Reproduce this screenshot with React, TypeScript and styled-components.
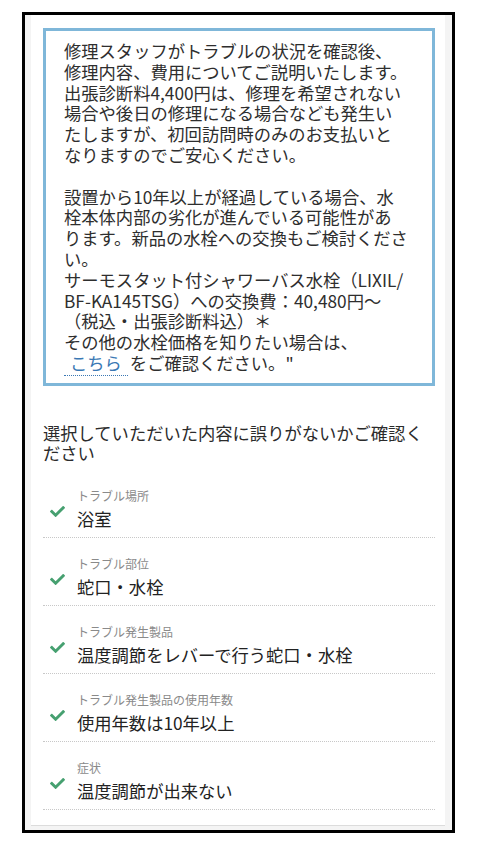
import styled, { createGlobalStyle } from 'styled-components';
import { FaCheck } from 'react-icons/fa';

const GlobalStyle = createGlobalStyle`
  html, body {
    margin: 0;
    padding: 0;
    background: #ffffff;
  }
  body {
    font-family: "Noto Sans CJK JP", "Noto Sans", sans-serif;
    color: #2b2b2b;
  }
`;

const Frame = styled.div`
  box-sizing: border-box;
  width: 433px;
  margin: 12px 0 0 22px;
  border: 3px solid #000;
  background: #f4f4f4;
  padding: 0 7px 4px 6px;
`;

const Panel = styled.section`
  background: #fff;
  border-bottom: 1px solid #dcdcdc;
  padding: 13px 10px 15px 12px;
`;

const Notice = styled.div`
  border: 3px solid #7fb7d9;
  padding: 10px 18px 9px 18px;
  font-size: 17.3px;
  line-height: 20.8px;
  color: #2e2e2e;
  white-space: nowrap;
`;

const Blank = styled.span`
  display: block;
  height: 20.8px;
`;

const MoreLink = styled.a`
  color: #3a78b4;
  text-decoration: none;
  padding: 0 6px 0 6px;
  margin-right: 2px;
  border-bottom: 1px dotted #3a78b4;
`;

const Heading = styled.h2`
  margin: 37px 0 6px;
  font-size: 17.3px;
  line-height: 20.5px;
  font-weight: 400;
  color: #2b2b2b;
`;

const List = styled.ul`
  list-style: none;
  margin: 0;
  padding: 0;
`;

const Item = styled.li`
  display: flex;
  align-items: center;
  padding: 18px 0 7px;
  border-bottom: 1px dotted #c8c8c8;
`;

const Mark = styled.span`
  flex: 0 0 34px;
  box-sizing: border-box;
  padding-left: 7px;
  margin-top: 6px;
  display: flex;
  color: #46a070;
`;

const Body = styled.div`
  display: flex;
  flex-direction: column;
  gap: 4px;
`;

const Label = styled.span`
  font-size: 12px;
  line-height: 16px;
  color: #8a8a8a;
`;

const Value = styled.span`
  font-size: 17.3px;
  line-height: 22px;
  color: #222;
`;

const answers = [
  { label: 'トラブル場所', value: '浴室' },
  { label: 'トラブル部位', value: '蛇口・水栓' },
  { label: 'トラブル発生製品', value: '温度調節をレバーで行う蛇口・水栓' },
  { label: 'トラブル発生製品の使用年数', value: '使用年数は10年以上' },
  { label: '症状', value: '温度調節が出来ない' },
];

export default function App() {
  return (
    <>
      <GlobalStyle />
      <Frame>
        <Panel>
          <Notice>
            修理スタッフがトラブルの状況を確認後、<br />
            修理内容、費用についてご説明いたします。<br />
            出張診断料4,400円は、修理を希望されない<br />
            場合や後日の修理になる場合なども発生い<br />
            たしますが、初回訪問時のみのお支払いと<br />
            なりますのでご安心ください。
            <Blank />
            設置から10年以上が経過している場合、水<br />
            栓本体内部の劣化が進んでいる可能性があ<br />
            ります。新品の水栓への交換もご検討くださ<br />
            い。<br />
            サーモスタット付シャワーバス水栓（LIXIL/<br />
            BF-KA145TSG）への交換費：40,480円～<br />
            （税込・出張診断料込）＊<br />
            その他の水栓価格を知りたい場合は、<br />
            <MoreLink href="#">こちら</MoreLink>をご確認ください。"
          </Notice>

          <Heading>選択していただいた内容に誤りがないかご確認ください</Heading>

          <List>
            {answers.map((a) => (
              <Item key={a.label}>
                <Mark>
                  <FaCheck size={15} />
                </Mark>
                <Body>
                  <Label>{a.label}</Label>
                  <Value>{a.value}</Value>
                </Body>
              </Item>
            ))}
          </List>
        </Panel>
      </Frame>
    </>
  );
}
